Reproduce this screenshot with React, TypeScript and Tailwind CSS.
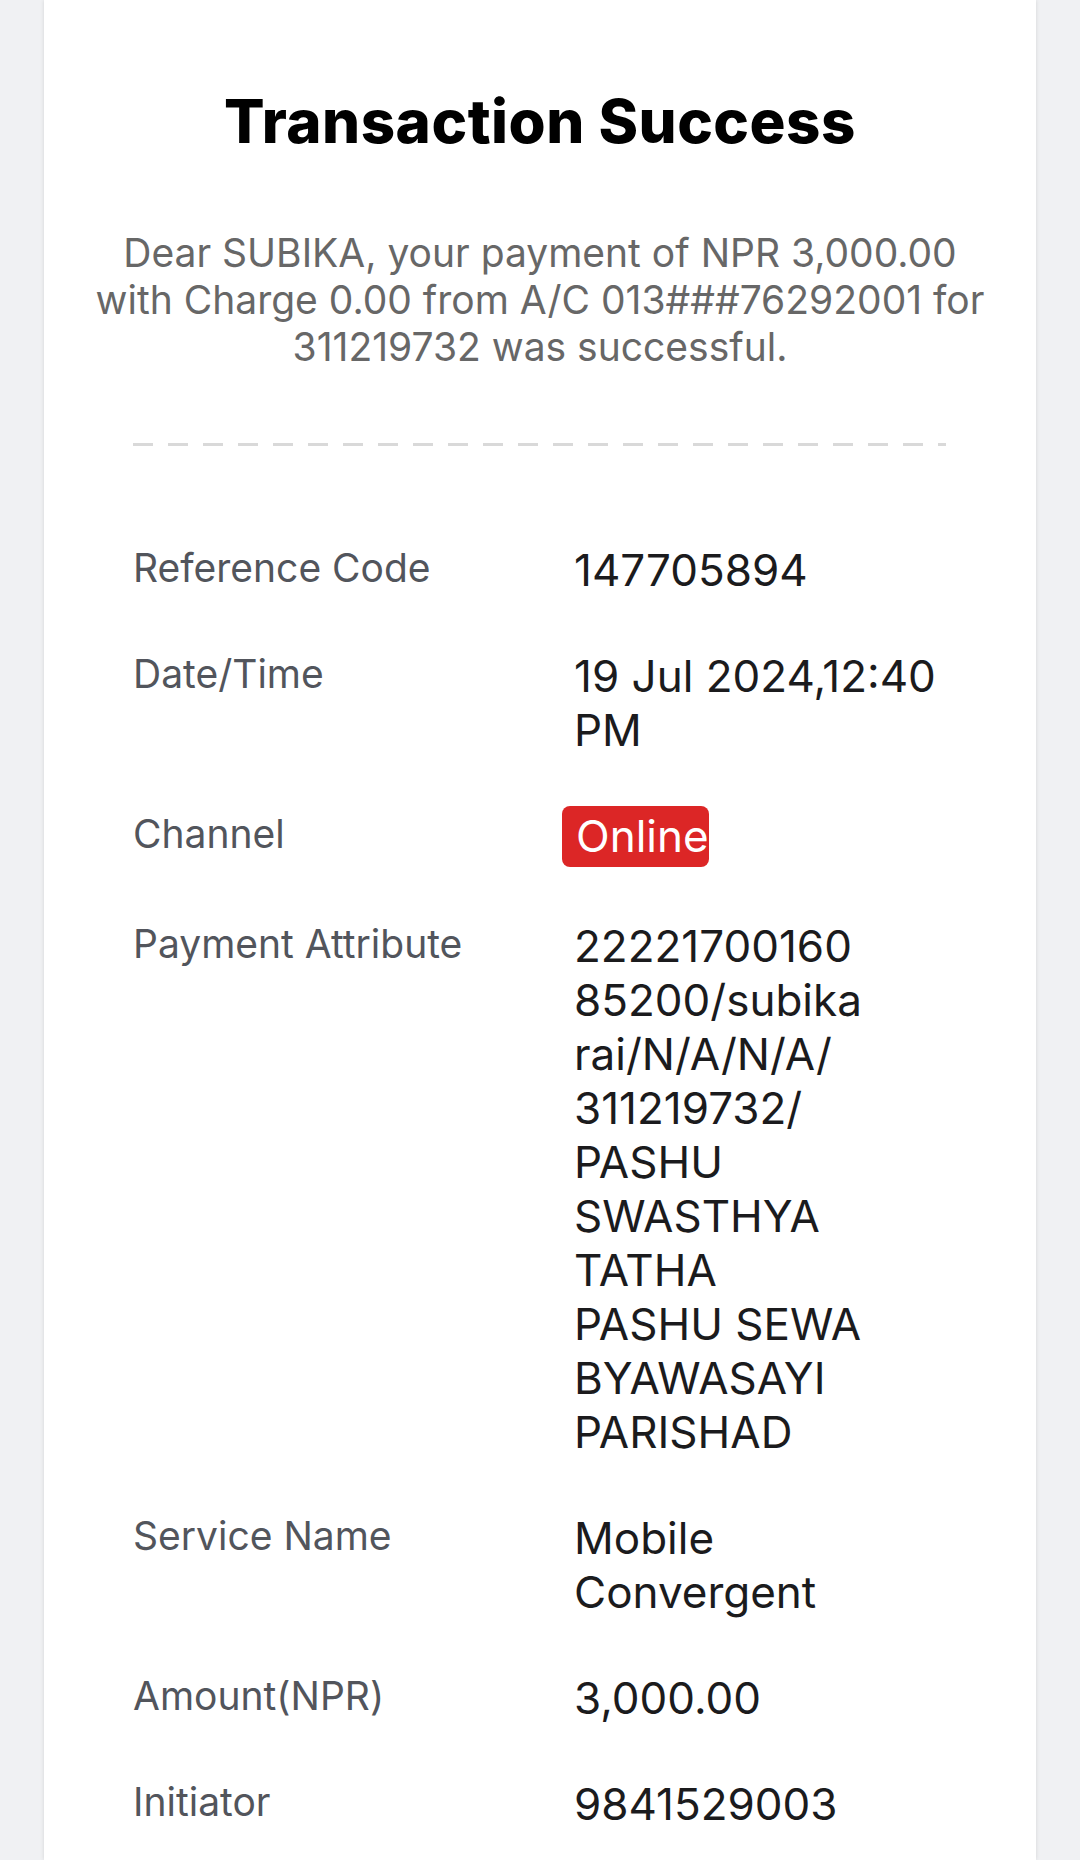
import React from "react";

interface DetailRowProps {
    label: string;
    children: React.ReactNode;
}

// one label / value pair of the receipt
const DetailRow: React.FC<DetailRowProps> = ({ label, children }) => {
    return (
        <div className="grid grid-cols-[441px_1fr] items-start">
            <p className="text-[39px] leading-[52px] -mt-[1px] text-[#52555c]">{label}</p>
            <div className="text-[44px] leading-[54px] text-[#1b1b1d]">{children}</div>
        </div>
    );
};

const paymentAttribute = [
    "22221700160",
    "85200/subika",
    "rai/N/A/N/A/",
    "311219732/",
    "PASHU",
    "SWASTHYA",
    "TATHA",
    "PASHU SEWA",
    "BYAWASAYI",
    "PARISHAD",
];

const App: React.FC = () => {
    return (
        <div
            className="w-[1080px] h-[1860px] overflow-hidden bg-[#f0f1f3]"
            style={{ fontFamily: "Inter, 'Noto Sans', sans-serif" }}
        >
            <div className="ml-[44px] w-[992px] h-full bg-white px-[89px] shadow-[0_0_4px_rgba(0,0,0,0.12)]">
                <h1 className="pt-[86px] text-center text-[60px] leading-[70px] font-extrabold text-black tracking-[0.5px]">
                    Transaction Success
                </h1>

                <p className="-mx-[50px] mt-[73px] text-center text-[39px] leading-[47px] text-[#676767]">
                    Dear SUBIKA, your payment of NPR 3,000.00
                    <br />
                    with Charge 0.00 from A/C 013###76292001 for
                    <br />
                    311219732 was successful.
                </p>

                {/* receipt tear line */}
                <div className="mt-[73px] h-[3px] w-[813px] bg-[repeating-linear-gradient(90deg,#d9d9d9_0_20px,transparent_20px_35px)]"></div>

                <div className="mt-[97px] flex flex-col gap-[52px]">
                    <DetailRow label="Reference Code">147705894</DetailRow>
                    <DetailRow label="Date/Time">19 Jul 2024,12:40 PM</DetailRow>
                    <DetailRow label="Channel">
                        <span className="-mt-[3px] -ml-[12px] inline-block rounded-[8px] bg-[#dc2626] pl-[14px] pt-[3px] pb-[4px] text-white">
                            Online
                        </span>
                    </DetailRow>
                    <DetailRow label="Payment Attribute">
                        {paymentAttribute.map((line) => (
                            <span key={line} className="block">{line}</span>
                        ))}
                    </DetailRow>
                    <DetailRow label="Service Name">
                        <span className="block w-[300px]">Mobile Convergent</span>
                    </DetailRow>
                    <DetailRow label="Amount(NPR)">3,000.00</DetailRow>
                    <DetailRow label="Initiator">9841529003</DetailRow>
                </div>
            </div>
        </div>
    );
};

export default App;
